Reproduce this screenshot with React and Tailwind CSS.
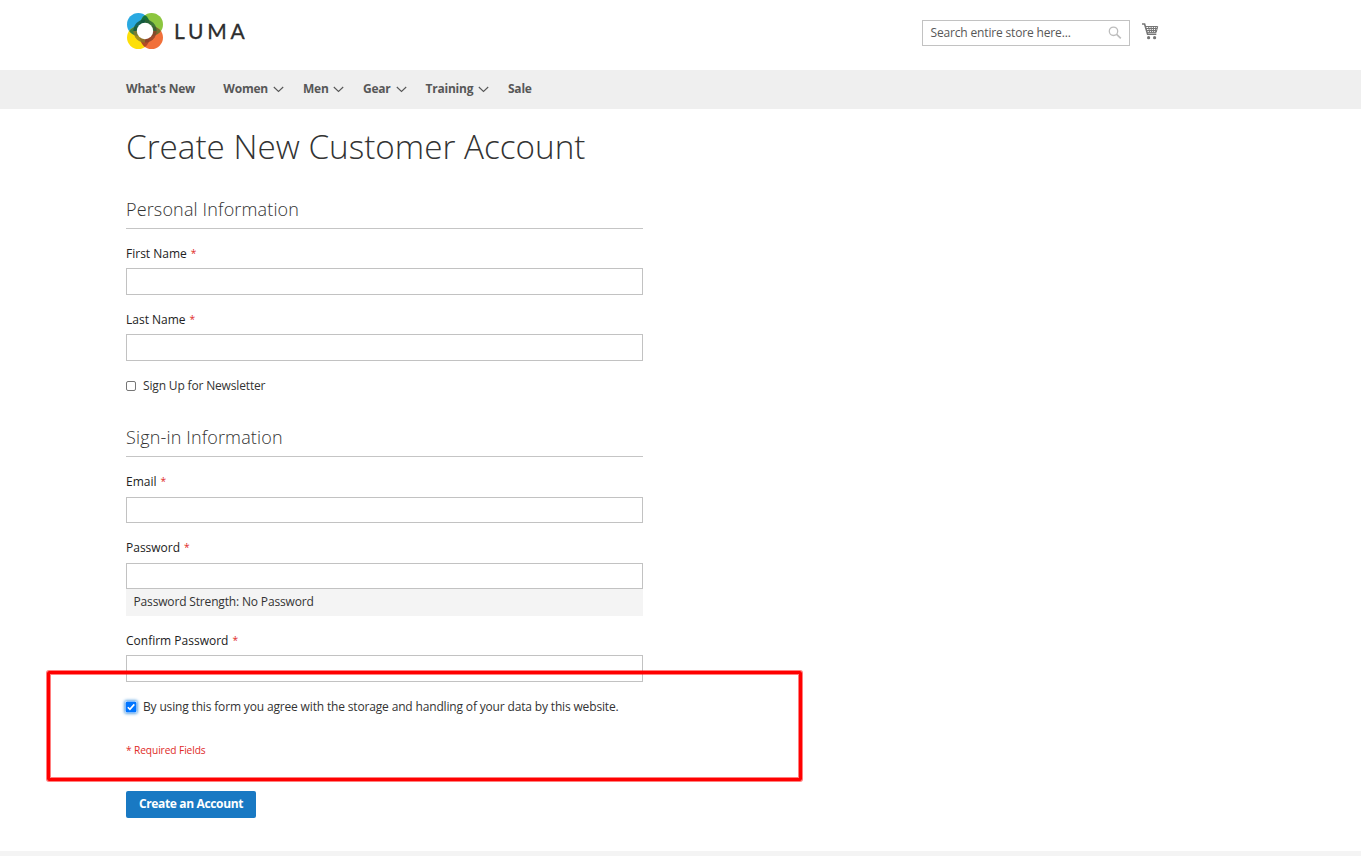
import React from "react";

const navItems = [
  { label: "What's New", width: "w-[97.3px]" },
  { label: "Women", width: "w-[79.7px]", menu: true },
  { label: "Men", width: "w-[60px]", menu: true },
  { label: "Gear", width: "w-[62.5px]", menu: true },
  { label: "Training", width: "w-[82.5px]", menu: true },
  { label: "Sale", width: "w-[40px]" },
];

function Logo() {
  return (
    <div className="flex items-center">
      <svg width="36" height="36" viewBox="0 0 36 36">
        <defs>
          <clipPath id="tl"><circle cx="11.4" cy="11.4" r="11.4" /></clipPath>
          <clipPath id="tr"><circle cx="24.6" cy="11.4" r="11.4" /></clipPath>
          <clipPath id="br"><circle cx="24.6" cy="24.6" r="11.4" /></clipPath>
        </defs>
        <circle cx="11.4" cy="11.4" r="11.4" fill="#29a9e1" />
        <circle cx="24.6" cy="11.4" r="11.4" fill="#8cc63f" />
        <circle cx="11.4" cy="24.6" r="11.4" fill="#fddf08" />
        <circle cx="24.6" cy="24.6" r="11.4" fill="#f1703a" />
        <circle cx="24.6" cy="11.4" r="11.4" fill="#14713c" clipPath="url(#tl)" />
        <circle cx="11.4" cy="24.6" r="11.4" fill="#3f8240" clipPath="url(#tl)" />
        <circle cx="24.6" cy="24.6" r="11.4" fill="#73702f" clipPath="url(#tr)" />
        <circle cx="11.4" cy="24.6" r="11.4" fill="#b04c26" clipPath="url(#br)" />
        <g fillOpacity="0.8">
          <path d="M18 6.4A11.6 11.6 0 0 0 6.4 18H18Z" fill="#12543f" />
          <path d="M18 6.4A11.6 11.6 0 0 1 29.6 18H18Z" fill="#2c6034" />
          <path d="M18 29.6A11.6 11.6 0 0 1 6.4 18H18Z" fill="#8a7a2a" />
          <path d="M18 29.6A11.6 11.6 0 0 0 29.6 18H18Z" fill="#8a412a" />
        </g>
        <circle cx="18" cy="18" r="8.2" fill="#fff" />
      </svg>
      <span className="ml-[11px] font-['Lato',sans-serif] text-[21px] leading-[34px] tracking-[3.8px] text-[#2d2d2d] [-webkit-text-stroke:0.3px_#2d2d2d]">LUMA</span>
    </div>
  );
}

function Chevron() {
  return (
    <svg className="mr-[18.5px] mt-px" width="11" height="7" viewBox="0 0 11 7" fill="none" stroke="#575757" strokeWidth="1.1">
      <path d="M.8 1 5.5 5.5 10.2 1" />
    </svg>
  );
}

function Cart() {
  return (
    <svg width="17" height="17" viewBox="0 0 17 17" fill="none" stroke="#757575">
      <path d="M0 1h2.6l3 10.3h8.7" strokeWidth="1.6" />
      <path d="M3.3 3.5h12.4l-1.5 5.9H5.2M3.8 5.5h11.4M4.3 7.5h10.5M6.5 3l1 6.2M9 3l.5 6.2M11.4 3v6.2M13.9 3l-.6 6.2" strokeWidth="1" />
      <circle cx="6.6" cy="14.7" r="1.6" fill="#757575" stroke="none" />
      <circle cx="12.6" cy="14.7" r="1.6" fill="#757575" stroke="none" />
    </svg>
  );
}

function Field({ label, input = "h-[27px]", gap = "mb-[16px]", children }) {
  return (
    <div className={gap}>
      <div className="flex h-[23px] items-start whitespace-nowrap text-[12px] font-medium leading-[17px] tracking-normal text-[#222]">
        {label}
        <span className="ml-[4px] text-[10.2px] font-normal text-[#e02b27]">*</span>
      </div>
      <div className={`${input} border border-[#c2c2c2] bg-white`} />
      {children}
    </div>
  );
}

function Legend({ children }) {
  return (
    <h2 className="h-[32px] border-b border-[#c5c5c5] text-[18px] font-light leading-[24px] tracking-[0.15px] text-[#333]">{children}</h2>
  );
}

export default function App() {
  return (
    <div className="relative flex h-[856px] w-[1361px] flex-col overflow-hidden bg-white font-['Open_Sans',sans-serif] text-[12px] tracking-[-0.16px] text-[#333]">
      <header className="flex h-[70px] shrink-0 items-start justify-between pl-[127px] pr-[202px]">
        <div className="pt-[13px]"><Logo /></div>
        <div className="flex items-start pt-[20px]">
          <div className="flex h-[26px] w-[208px] items-center justify-between border border-[#c2c2c2] pl-[7.5px] pr-[7px] leading-[18px] text-[#575757]">
            <span>Search entire store here...</span>
            <svg width="14" height="14" viewBox="0 0 14 14" fill="none" stroke="#bdbdbd">
              <circle cx="5.5" cy="5.3" r="4.2" strokeWidth="1.3" />
              <path d="m8.6 8.4 4.2 4" strokeWidth="1.6" />
            </svg>
          </div>
          <div className="ml-[12px] pt-[3px]"><Cart /></div>
        </div>
      </header>

      <nav className="flex h-[39px] shrink-0 items-center bg-[#efefef] pb-px pl-[126px] font-bold tracking-[-0.22px] text-[#575757]">
        {navItems.map((item) => (
          <div key={item.label} className={`${item.width} flex items-center justify-between whitespace-nowrap`}>
            {item.label}
            {item.menu && <Chevron />}
          </div>
        ))}
      </nav>

      <main className="ml-[126px] flex w-[517px] flex-col">
        <h1 className="h-[88px] whitespace-nowrap pt-[17px] text-[33.25px] font-light leading-[40px] tracking-normal text-[#333]">Create New Customer Account</h1>
        <Legend>Personal Information</Legend>
        <div className="h-[16px]" />
        <Field label="First Name" />
        <Field label="Last Name" />
        <label className="flex h-[18px] items-center">
          <span className="mr-[7px] size-[10px] rounded-[2px] border border-[#767676]" />
          Sign Up for Newsletter
        </label>
        <div className="h-[30px]" />
        <Legend>Sign-in Information</Legend>
        <div className="h-[16px]" />
        <Field label="Email" input="mt-px h-[26px]" />
        <Field label="Password" input="mt-px h-[26px]">
          <div className="h-[27px] bg-[#f4f4f4] pl-[7.5px] leading-[25px]">Password Strength: No Password</div>
        </Field>
        <Field label="Confirm Password" />
        <label className="flex h-[18px] items-center whitespace-nowrap">
          <svg className="-ml-px mr-[6px] shrink-0 rounded-[2px] shadow-[0_0_3px_1px_#68a8e0]" width="12" height="12" viewBox="0 0 12 12">
            <rect x=".5" y=".5" width="11" height="11" rx="1.5" fill="#0075ff" />
            <path d="m2.8 6.2 2.1 2.2 4.4-5" fill="none" stroke="#fff" strokeWidth="1.6" />
          </svg>
          By using this form you agree with the storage and handling of your data by this website.
        </label>
        <p className="mt-[26px] h-[16px] text-[10.2px] leading-[16px] tracking-[-0.1px] text-[#e02b27]">* Required Fields</p>
        <button className="mt-[33px] h-[27px] w-[130px] rounded-[2px] bg-[#1979c3] pb-px text-[12px] font-bold leading-[16px] tracking-[-0.35px] text-white">Create an Account</button>
      </main>

      <footer className="mt-auto h-[5px] shrink-0 bg-[#f4f4f4]" />
      <div className="absolute left-[47px] top-[671px] h-[110px] w-[755px] rounded-[2px] border-3 border-[#ff0000] shadow-[0_0_0_1px_#ff000080,inset_0_0_0_1px_#ff000080]" />
    </div>
  );
}
